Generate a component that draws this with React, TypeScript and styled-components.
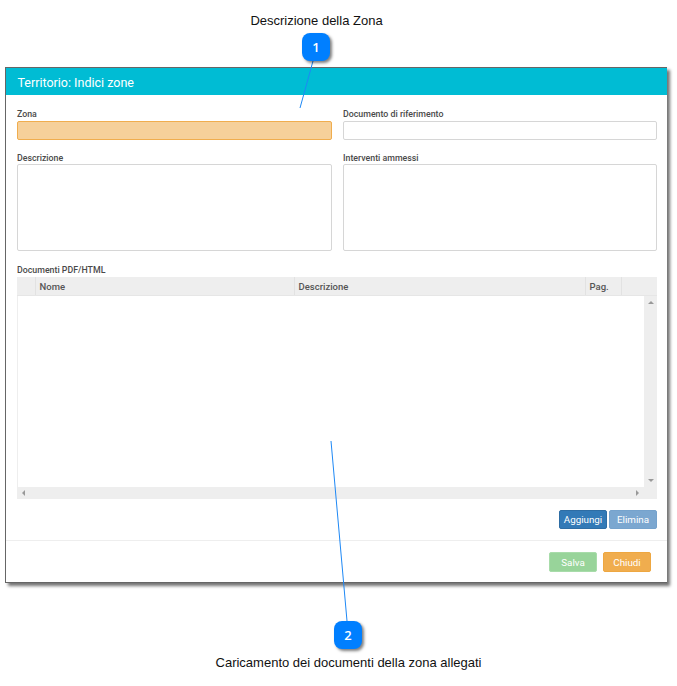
import React from "react";
import styled, { createGlobalStyle } from "styled-components";

const GlobalStyle = createGlobalStyle`
  html, body {
    margin: 0;
    padding: 0;
    background: #fff;
    font-family: "Liberation Sans", Arial, sans-serif;
  }
`;

const Page = styled.div`
  position: relative;
  width: 677px;
  height: 686px;
  overflow: hidden;
`;

const Caption = styled.div<{ $width: number; $height: number; $bottom?: number }>`
  width: ${(props) => props.$width}px;
  height: ${(props) => props.$height}px;
  margin-bottom: ${(props) => props.$bottom ?? 0}px;
  display: flex;
  justify-content: center;
  align-items: flex-end;
  font-size: 13px;
  line-height: 14px;
  color: #111;
`;

const Dialog = styled.div`
  margin: 0 0 0 5px;
  width: 662px;
  height: 516px;
  box-sizing: border-box;
  display: flex;
  flex-direction: column;
  background: #fff;
  border: 1px solid #666;
  border-width: 1px 0 1px 1px;
  box-shadow: 3px 3px 3px rgba(0, 0, 0, 0.55);
`;

const Header = styled.div`
  height: 27px;
  flex: none;
  display: flex;
  align-items: center;
  padding: 2px 0 0 11.5px;
  box-sizing: border-box;
  background: #00bcd4;
  color: #fff;
  font-family: Roboto, sans-serif;
  font-size: 12.5px;
`;

const Form = styled.div`
  padding: 14px 10px 0 11px;
  display: grid;
  grid-template-columns: 315px 314px;
  column-gap: 11px;
`;

const Field = styled.div<{ $bottom: number }>`
  display: flex;
  flex-direction: column;
  margin-bottom: ${(props) => props.$bottom}px;
`;

const Label = styled.label`
  display: block;
  height: 11px;
  font-family: Roboto, sans-serif;
  font-size: 8.8px;
  line-height: 11px;
  font-weight: 500;
  color: #4a4a4a;
`;

const Input = styled.div<{ $active?: boolean }>`
  height: 19px;
  box-sizing: border-box;
  margin-top: 1px;
  border-radius: 2px;
  border: 1px solid ${(props) => (props.$active ? "#f0ad4e" : "#d6d6d6")};
  background: ${(props) => (props.$active ? "#f6d09a" : "#fff")};
`;

const TextArea = styled.div`
  height: 87px;
  box-sizing: border-box;
  border-radius: 2px;
  border: 1px solid #d6d6d6;
  background: #fff;
`;

const GridSection = styled.div`
  padding: 0 10px 0 11px;
`;

const DocGrid = styled.div`
  height: 222px;
  margin-top: 1px;
  display: grid;
  grid-template-columns: 1fr 13px;
  grid-template-rows: 19px 1fr 12px;
  background: #eee;
`;

const HeaderRow = styled.div`
  grid-column: 1 / 3;
  display: grid;
  grid-template-columns: 19px 259px 291px 36px 1fr;
  border-bottom: 1px solid #e6e6e6;
`;

const HeaderCell = styled.div`
  display: flex;
  align-items: center;
  padding-left: 3.5px;
  border-right: 1px solid #e2e2e2;
  font-family: Roboto, sans-serif;
  font-size: 9.5px;
  font-weight: 500;
  color: #555;

  &:last-child {
    border-right: 0;
  }
`;

const GridBody = styled.div`
  background: #fff;
  border-left: 1px solid #eee;
`;

const VerticalBar = styled.div`
  display: flex;
  flex-direction: column;
  justify-content: space-between;
  align-items: center;
  padding: 5px 0 5px;
`;

const HorizontalBar = styled.div`
  display: flex;
  justify-content: space-between;
  align-items: center;
  padding: 0 5px 0 5px;
`;

const Arrow = styled.span<{ $dir: "up" | "down" | "left" | "right" }>`
  width: 0;
  height: 0;
  border: 3px solid transparent;
  ${(props) =>
    props.$dir === "up"
      ? "border-bottom-color: #999; border-top-width: 0;"
      : props.$dir === "down"
      ? "border-top-color: #999; border-bottom-width: 0;"
      : props.$dir === "left"
      ? "border-right-color: #999; border-left-width: 0;"
      : "border-left-color: #999; border-right-width: 0;"}
`;

const GridActions = styled.div`
  display: flex;
  justify-content: flex-end;
  gap: 2px;
  padding: 11px 10px 11px 0;
  border-bottom: 1px solid #eee;
`;

const Footer = styled.div`
  display: flex;
  justify-content: flex-end;
  gap: 6px;
  padding: 11px 16px 0 0;
`;

const Button = styled.div<{ $bg: string; $edge: string; $height: number }>`
  width: 48px;
  height: ${(props) => props.$height}px;
  box-sizing: border-box;
  display: flex;
  align-items: center;
  justify-content: center;
  border-radius: 2px;
  border: 1px solid ${(props) => props.$edge};
  background: ${(props) => props.$bg};
  color: #fff;
  font-family: Roboto, sans-serif;
  font-size: 9.8px;
  font-weight: 400;
`;

const Leaders = styled.svg`
  position: absolute;
  left: 0;
  top: 0;
  pointer-events: none;
`;

const Badge = styled.div<{ $left: number; $top: number }>`
  position: absolute;
  left: ${(props) => props.$left}px;
  top: ${(props) => props.$top}px;
  width: 28px;
  height: 28px;
  display: flex;
  align-items: center;
  justify-content: center;
  border-radius: 8px;
  background: #007fff;
  color: #fff;
  font-family: "Open Sans", sans-serif;
  font-size: 13px;
  font-weight: 600;
  box-shadow: 2px 2px 3px rgba(0, 0, 0, 0.5);
`;

export default function App() {
  return (
    <Page>
      <GlobalStyle />
      <Caption $width={633} $height={28} $bottom={39}>Descrizione della Zona</Caption>
      <Dialog>
        <Header>Territorio: Indici zone</Header>
        <Form>
          <Field $bottom={13}>
            <Label>Zona</Label>
            <Input $active />
          </Field>
          <Field $bottom={13}>
            <Label>Documento di riferimento</Label>
            <Input />
          </Field>
          <Field $bottom={14}>
            <Label>Descrizione</Label>
            <TextArea />
          </Field>
          <Field $bottom={14}>
            <Label>Interventi ammessi</Label>
            <TextArea />
          </Field>
        </Form>
        <GridSection>
          <Label>Documenti PDF/HTML</Label>
          <DocGrid>
            <HeaderRow>
              <HeaderCell />
              <HeaderCell>Nome</HeaderCell>
              <HeaderCell>Descrizione</HeaderCell>
              <HeaderCell>Pag.</HeaderCell>
              <HeaderCell />
            </HeaderRow>
            <GridBody />
            <VerticalBar>
              <Arrow $dir="up" />
              <Arrow $dir="down" />
            </VerticalBar>
            <HorizontalBar>
              <Arrow $dir="left" />
              <Arrow $dir="right" />
            </HorizontalBar>
          </DocGrid>
        </GridSection>
        <GridActions>
          <Button $bg="#337ab7" $edge="#2e6da4" $height={19}>Aggiungi</Button>
          <Button $bg="#7ba7d0" $edge="#75a2cc" $height={19}>Elimina</Button>
        </GridActions>
        <Footer>
          <Button $bg="#98d49a" $edge="#a8dcaa" $height={20}>Salva</Button>
          <Button $bg="#f0ad4e" $edge="#eea741" $height={20}>Chiudi</Button>
        </Footer>
      </Dialog>
      <Caption $width={697} $height={87}>Caricamento dei documenti della zona allegati</Caption>
      <Leaders width={677} height={686} viewBox="0 0 677 686">
        <line x1="313" y1="61" x2="300" y2="108" stroke="#1e88f5" strokeWidth="1" />
        <line x1="331" y1="441" x2="347" y2="621" stroke="#1e88f5" strokeWidth="1" />
      </Leaders>
      <Badge $left={302} $top={33}>1</Badge>
      <Badge $left={334} $top={621}>2</Badge>
    </Page>
  );
}
